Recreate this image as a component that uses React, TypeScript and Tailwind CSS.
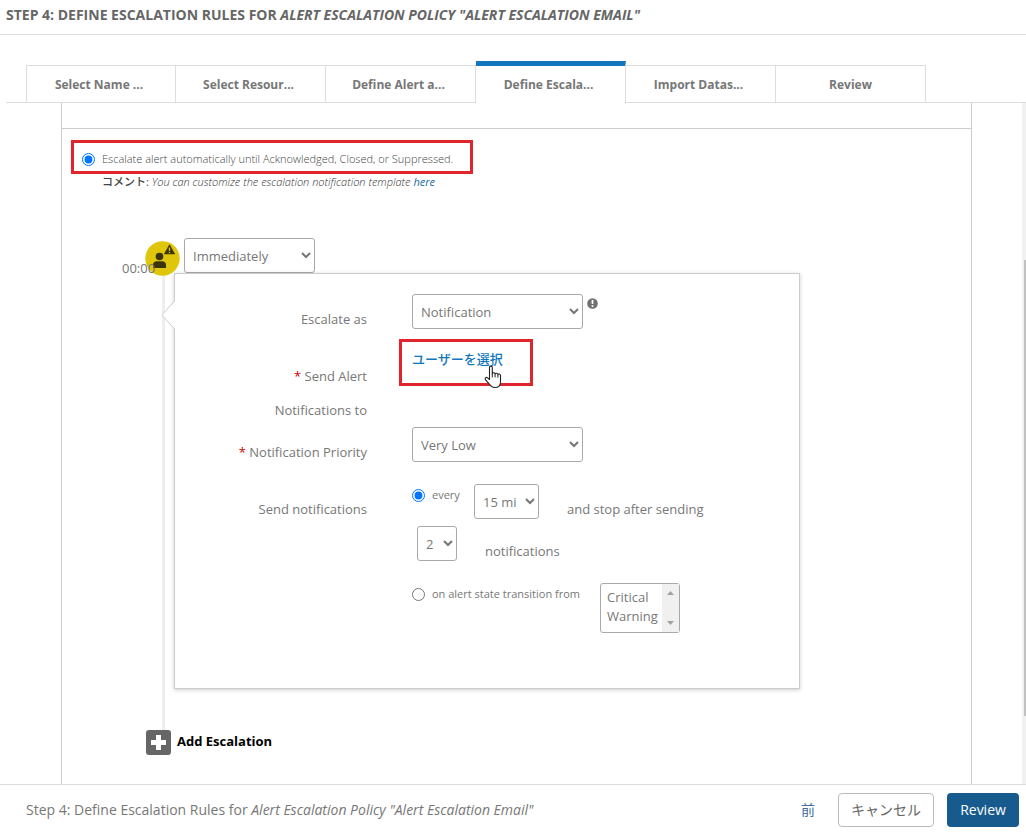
import type { ReactNode } from "react";

const tabs = [
  "Select Name ...",
  "Select Resour...",
  "Define Alert a...",
  "Define Escala...",
  "Import Datas...",
  "Review",
];

const activeTab = 3;

const selectClass =
  "h-[35px] rounded-[3px] border border-[#a9a9a9] bg-white pl-1 text-[13px] text-[#777]";

const FormLabel = ({
  htmlFor,
  required,
  children,
}: {
  htmlFor: string;
  required?: boolean;
  children: ReactNode;
}) => {
  return (
    <label
      htmlFor={htmlFor}
      className="w-[192px] shrink-0 pt-2 text-right leading-[34px]"
    >
      {required && <span className="text-[#c00]">* </span>}
      {children}
    </label>
  );
};

const EscalationIcon = () => {
  return (
    <svg width="35" height="35" viewBox="0 0 35 35" aria-hidden="true">
      <circle cx="17.5" cy="17.5" r="17.2" fill="#e0c60a" />
      <circle cx="14.5" cy="15.5" r="3.8" fill="#3b3405" />
      <path
        d="M8 27v-3.2c0-2.2 1.6-3.6 3.8-3.6h5.4c2.2 0 3.8 1.4 3.8 3.6V27z"
        fill="#3b3405"
      />
      <path d="M24.5 3.2 30.2 13.2H18.8z" fill="#3b3405" />
      <path d="M24.5 6.5v3.4M24.5 11v1.2" stroke="#e0c60a" strokeWidth="1.3" />
    </svg>
  );
};

const HandCursor = () => {
  return (
    <svg
      width="18"
      height="24"
      viewBox="0 0 18 24"
      className="absolute top-[14px] left-[72px] z-10"
      aria-hidden="true"
    >
      <path
        d="M5.5 14.5V2.6c0-2 2.8-2 2.8 0v6.2c.2-1.5 2.8-1.4 2.8.4 .3-1.4 2.8-1.2 2.8.6 .4-1.2 2.6-1 2.6.8V17c0 3.6-2 5.5-5.6 5.5-3 0-4.4-1.3-5.6-3.4L1.4 14.6c-.8-1.6.8-2.9 2.2-1.7z"
        fill="#fff"
        stroke="#222"
        strokeWidth="1.1"
        strokeLinejoin="round"
      />
      <path d="M8.3 8.8v3.6M11.1 9.4v3M13.9 10v2.6" stroke="#222" strokeWidth="1" />
    </svg>
  );
};

const EscalationCard = () => {
  return (
    <div className="relative border border-[#ccc] bg-white pt-5 pb-[53px] text-[13px] text-[#777] shadow-[0_1px_4px_rgba(0,0,0,0.2)]">
      <svg
        width="15"
        height="30"
        viewBox="0 0 15 30"
        className="absolute top-[26px] -left-[14px]"
        aria-hidden="true"
      >
        <path d="M15 0 .8 15 15 30z" fill="#fff" />
        <path d="M13.5 .5V1L.8 15l12.7 14" fill="none" stroke="#ccc" />
      </svg>

      <div className="flex gap-[45px] pb-[15px]">
        <FormLabel htmlFor="escalate-as">Escalate as</FormLabel>
        <div className="flex items-start gap-1">
          <select id="escalate-as" className={`${selectClass} w-[171px]`}>
            <option>Notification</option>
          </select>
          <svg width="11" height="11" viewBox="0 0 11 11" className="mt-1" aria-hidden="true">
            <circle cx="5.5" cy="5.5" r="5.3" fill="#707070" />
            <path d="M5.5 2v4M5.5 7.3v1.6" stroke="#fff" strokeWidth="1.7" />
          </svg>
        </div>
      </div>

      <div className="flex gap-[45px]">
        <FormLabel htmlFor="choose-users" required>
          Send Alert
          <br />
          Notifications to
        </FormLabel>
        <div className="relative">
          <a
            id="choose-users"
            href="#users"
            className="block leading-4 font-medium text-[#1176bc]"
          >
            ユーザーを選択
          </a>
          <HandCursor />
          <div className="pointer-events-none absolute -top-3 -left-[13px] h-[47px] w-[134px] border-3 border-[#e0262c]" />
        </div>
      </div>

      <div className="flex gap-[45px] pb-[15px]">
        <FormLabel htmlFor="priority" required>
          Notification Priority
        </FormLabel>
        <select id="priority" className={`${selectClass} w-[171px]`}>
          <option>Very Low</option>
        </select>
      </div>

      <div className="flex gap-[45px]">
        <FormLabel htmlFor="interval">Send notifications</FormLabel>
        <div>
          <div className="flex items-start">
            <label className="flex w-[62px] items-center gap-[7px] pt-1 text-[11px] leading-[14px]">
              <input type="radio" name="frequency" defaultChecked className="size-[13px]" />
              every
            </label>
            <select id="interval" className={`${selectClass} w-[65px]`}>
              <option>15 mi</option>
            </select>
            <span className="pt-2 pl-7 leading-[34px]">and stop after sending</span>
          </div>
          <div className="flex h-[35px] items-start pl-[5px]">
            <select id="count" aria-label="Notification count" className={`${selectClass} w-10`}>
              <option>2</option>
            </select>
            <label htmlFor="count" className="pt-2 pl-7 leading-[34px]">
              notifications
            </label>
          </div>
          <div className="mt-[22px] flex items-start">
            <label className="flex w-[188px] items-center gap-[7px] pt-1 text-[11px] leading-[14px]">
              <input type="radio" name="frequency" className="size-[13px]" />
              on alert state transition from
            </label>
            <div className="relative">
              <select
                multiple
                size={2}
                aria-label="Alert states"
                className="h-[50px] w-20 overflow-hidden rounded-[3px] border border-[#a9a9a9] pt-1 pl-[3px] text-[13px]"
              >
                <option className="h-[19px] pl-[3px]">Critical</option>
                <option className="h-[19px] pl-[3px]">Warning</option>
              </select>
              <div className="absolute top-px right-px flex h-12 w-[17px] flex-col items-center justify-between bg-[#f0f0f0] py-[7px]">
                <svg width="7" height="4" viewBox="0 0 7 4" aria-hidden="true">
                  <path d="M0 4 3.5 0 7 4z" fill="#a0a0a0" />
                </svg>
                <svg width="7" height="4" viewBox="0 0 7 4" aria-hidden="true">
                  <path d="M0 0 3.5 4 7 0z" fill="#a0a0a0" />
                </svg>
              </div>
            </div>
          </div>
        </div>
      </div>
    </div>
  );
};

export default function App() {
  return (
    <div className="flex min-h-screen flex-col bg-white font-['Open_Sans','Noto_Sans_CJK_JP',sans-serif] text-[#666]">
      <header className="border-b border-[#ddd] px-1.5 pt-[5px] pb-[9px]">
        <h1 className="text-sm leading-5 font-bold uppercase">
          Step 4: Define Escalation Rules for{" "}
          <em>Alert Escalation Policy "Alert Escalation Email"</em>
        </h1>
      </header>

      <nav className="ml-1.5 flex border-b border-[#ddd] pt-[26px] pl-5">
        {tabs.map((tab, i) => (
          <button
            key={tab}
            type="button"
            className={
              i === activeTab
                ? "-mb-px h-[42px] w-[150px] border-t-5 border-r border-t-[#1176bc] border-r-[#ddd] bg-white pr-1 text-xs font-bold text-[#777]"
                : "mt-1 h-[37px] w-[150px] border-t border-r border-[#ddd] pt-0.5 pr-1 text-xs font-bold text-[#777] first:border-l last:pr-0"
            }
          >
            {tab}
          </button>
        ))}
      </nav>

      <main className="flex grow">
        <div className="mr-[50px] ml-[61px] grow border-x border-[#ccc]">
          <div className="h-[26px] border-b border-[#ccc]" />

          <section className="pt-[11px] pl-[9px]">
            <label className="flex h-[34px] w-[402px] items-center gap-[7px] border-3 border-[#e0262c] pt-1 pl-2 text-[11px] font-light text-[#444]">
              <input type="radio" name="mode" defaultChecked className="size-[13px]" />
              Escalate alert automatically until Acknowledged, Closed, or Suppressed.
            </label>
            <p className="pl-[31px] text-[11px] leading-4 font-light text-[#333] italic">
              <b className="font-medium text-[#444] not-italic">コメント:</b> You can customize
              the escalation notification template{" "}
              <a href="#template" className="font-normal text-[#1b6ca8]">
                here
              </a>
            </p>
          </section>

          <section className="pt-12">
            <div className="flex h-[35px] pl-[60px]">
              <time className="relative z-20 w-[23px] pt-5 text-[13px] leading-5 text-[#777]">
                00:00
              </time>
              <div className="relative z-10 mt-[3px] mr-1">
                <EscalationIcon />
              </div>
              <select aria-label="Escalation delay" className={`${selectClass} w-[131px]`}>
                <option>Immediately</option>
              </select>
            </div>
            <div className="flex">
              <div className="flex w-[112px] shrink-0 justify-end pr-[9px]">
                <div className="w-[3px] bg-[#eee]" />
              </div>
              <div className="w-[626px] pb-[41px]">
                <EscalationCard />
              </div>
            </div>
            <button
              type="button"
              className="ml-[84px] flex items-center gap-1.5 text-[13px] font-bold text-black"
            >
              <svg width="25" height="25" viewBox="0 0 25 25" aria-hidden="true">
                <rect width="25" height="25" rx="3" fill="#666" />
                <path d="M12.5 5v15M5 12.5h15" stroke="#fff" strokeWidth="5" />
              </svg>
              Add Escalation
            </button>
          </section>
        </div>
        <div className="w-1 bg-[#f1f1f1] pt-[157px]">
          <div className="ml-0.5 h-[456px] bg-[#c1c1c1]" />
        </div>
      </main>

      <footer className="flex h-12 items-center border-t border-[#ddd] pt-[3px] pr-[7px] pl-[26px] text-sm text-[#777]">
        <p className="grow">
          Step 4: Define Escalation Rules for <em>Alert Escalation Policy "Alert Escalation Email"</em>
        </p>
        <button type="button" className="mr-[23px] text-[#3f6d9b]">
          前
        </button>
        <button
          type="button"
          className="mr-[13px] h-[34px] w-24 rounded border border-[#bbb] text-[#666]"
        >
          キャンセル
        </button>
        <button type="button" className="h-[34px] w-[72px] rounded bg-[#175b8e] text-white">
          Review
        </button>
      </footer>
    </div>
  );
}
